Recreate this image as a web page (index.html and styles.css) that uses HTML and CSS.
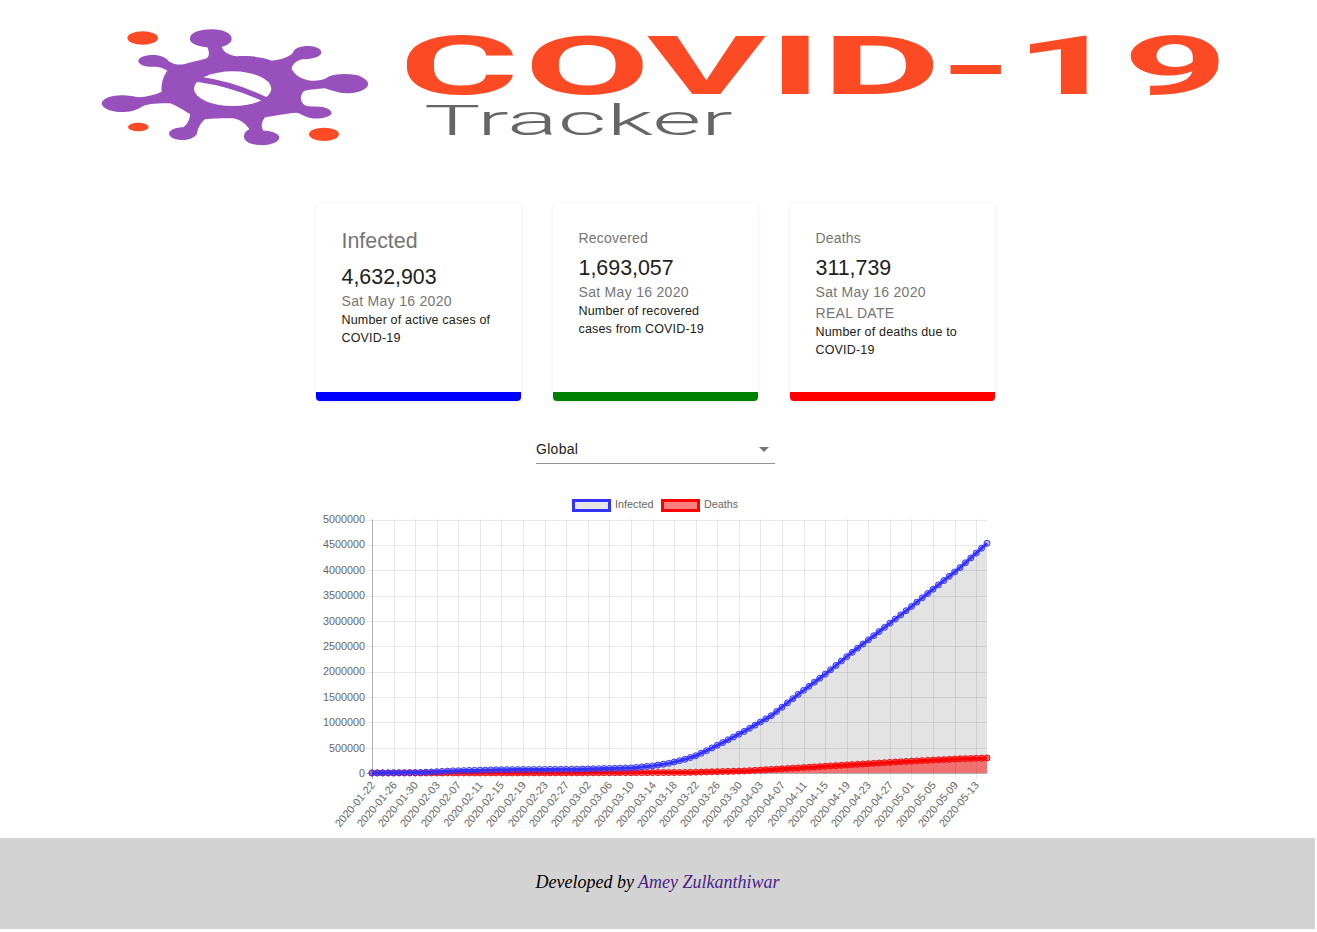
FILE: index.html
```html
<!DOCTYPE html>
<html lang="en">
<head>
    <meta charset="UTF-8">
    <meta name="viewport" content="width=device-width, initial-scale=1.0">
    <title>COVID-19 Tracker</title>
    <link rel="stylesheet" href="styles.css">
</head>
<body>
    <div class="app">
        <svg class="logo" viewBox="0 0 1315 170" role="img" aria-label="COVID-19 Tracker">
            <g transform="translate(90 10) scale(0.3333)">
                <path class="virus" fill-rule="evenodd" d="M352 112 C315 108 298 98 300 84 C302 66 335 58 365 58 C400 58 425 70 425 86 C425 100 405 108 395 110 C400 125 415 135 440 139 C480 136 520 142 545 152 C570 150 590 145 608 130 C612 115 630 108 655 108 C680 108 695 118 694 128 C692 142 660 148 635 148 C620 152 605 165 605 178 C615 195 635 210 665 212 C690 212 705 208 715 200 C735 190 770 190 800 195 C825 203 835 215 835 222 C833 240 800 250 770 250 C745 250 720 240 705 235 C680 238 650 238 640 245 C630 258 630 270 640 282 C650 292 665 288 690 290 C710 292 725 300 725 310 C722 322 690 328 665 325 C645 320 635 312 620 308 C590 310 550 318 525 322 C515 335 512 350 520 362 C545 362 568 370 568 383 C566 398 540 405 515 405 C485 405 462 395 462 380 C462 368 470 362 478 358 C470 345 455 330 430 325 C400 325 365 325 345 328 C330 340 325 355 322 365 C322 380 300 390 275 390 C250 390 237 380 237 370 C240 358 262 352 280 352 C295 340 300 325 300 312 C280 300 255 285 240 280 C210 280 175 280 155 290 C140 302 110 308 85 306 C55 304 35 292 35 280 C37 265 65 256 95 256 C115 256 135 260 145 262 C170 260 195 255 215 245 C213 225 218 200 232 182 C215 170 200 170 185 170 C160 170 145 162 145 152 C148 140 170 135 190 135 C210 135 228 142 238 155 C255 165 270 165 285 162 C310 155 335 150 350 145 C362 135 355 120 352 112 Z"/>
                <ellipse class="hole" cx="428" cy="236" rx="116" ry="52"/>
                <path class="slash" d="M320 207 Q430 222 525 268"/>
                <ellipse class="dot" cx="158" cy="84" rx="46" ry="20"/>
                <ellipse class="dot" cx="145" cy="351" rx="31" ry="13"/>
                <ellipse class="dot" cx="702" cy="373" rx="45" ry="20"/>
            </g>
            <text class="logo-title" transform="translate(405 94) scale(2.23 1)" x="-2.6 53.5 108.4 163 187 240 273.5 322">COVID-19</text>
            <text class="logo-sub" x="424" y="135" textLength="309" lengthAdjust="spacingAndGlyphs">Tracker</text>
        </svg>

        <div class="cards">
            <div class="card card-blue">
                <h5 class="card-title">Infected</h5>
                <div class="card-count">4,632,903</div>
                <div class="card-date">Sat May 16 2020</div>
                <p class="card-text">Number of active cases of COVID-19</p>
            </div>
            <div class="card card-green">
                <div class="card-label">Recovered</div>
                <div class="card-count">1,693,057</div>
                <div class="card-date">Sat May 16 2020</div>
                <p class="card-text">Number of recovered cases from COVID-19</p>
            </div>
            <div class="card card-red">
                <div class="card-label">Deaths</div>
                <div class="card-count">311,739</div>
                <div class="card-date">Sat May 16 2020</div>
                <div class="card-date">REAL DATE</div>
                <p class="card-text">Number of deaths due to COVID-19</p>
            </div>
        </div>

        <div class="picker">
            <span>Global</span>
            <svg class="picker-arrow" viewBox="0 0 24 24"><path d="M7 10l5 5 5-5z"/></svg>
        </div>

        <svg id="chart" class="chart" viewBox="316 490 679 348"></svg>
    </div>

    <footer class="footer">
        <span>Developed by <a href="#">Amey Zulkanthiwar</a></span>
    </footer>

    <script src="chart.js"></script>
</body>
</html>
```
FILE: styles.css
```css
html {
    font-size: 14px;
}
body {
    font-family: 'Liberation Sans', Arial, sans-serif;
    margin: 0;
    background-color: #fff;
}
.app {
    width: 1311px;
    display: flex;
    flex-direction: column;
    align-items: center;
}
.logo {
    display: block;
    width: 1315px;
    height: 170px;
    margin-right: -4px;
    filter: blur(0.5px);
}
.virus {
    fill: #9850bd;
}
.hole {
    fill: #fff;
}
.slash {
    fill: none;
    stroke: #9850bd;
    stroke-width: 16;
}
.dot {
    fill: #fc4a24;
}
.logo-title {
    font-family: Roboto, sans-serif;
    font-size: 82px;
    font-weight: 700;
    fill: #fc4a24;
}
.logo-sub {
    font-family: Roboto, sans-serif;
    font-size: 42px;
    font-weight: 300;
    fill: #666;
}
.cards {
    display: flex;
    gap: 32px;
    margin-top: 33px;
}
.card {
    width: 205px;
    height: 198px;
    box-sizing: border-box;
    padding: 25px 25.5px 0;
    background: #fff;
    border-radius: 4px;
    box-shadow: 0 1px 3px rgba(0,0,0,0.1);
}
.card-blue {
    border-bottom: 9px solid #0000ff;
}
.card-green {
    border-bottom: 9px solid #008000;
}
.card-red {
    border-bottom: 9px solid #ff0000;
}
.card-title {
    margin: -1px 0 8px;
    font-size: 21.4px;
    line-height: 28px;
    font-weight: 400;
    color: #757575;
}
.card-label {
    margin-bottom: 5px;
    font-size: 14px;
    line-height: 21px;
    letter-spacing: 0.2px;
    color: #757575;
}
.card-count {
    font-size: 21.4px;
    line-height: 28px;
    color: #212121;
}
.card-date {
    font-size: 14px;
    line-height: 21px;
    letter-spacing: 0.3px;
    color: #757575;
}
.card-text {
    margin: -1px 0 0;
    font-size: 12.5px;
    line-height: 18px;
    letter-spacing: 0.17px;
    color: #212121;
}
.picker {
    width: 239px;
    height: 24px;
    box-sizing: border-box;
    margin-top: 39px;
    margin-bottom: 26px;
    display: flex;
    justify-content: space-between;
    align-items: flex-start;
    border-bottom: 1px solid #949494;
    font-size: 14px;
    line-height: 18px;
    letter-spacing: 0.3px;
    color: #212121;
}
.picker-arrow {
    width: 24px;
    height: 24px;
    margin-top: -3px;
    margin-right: -1px;
    fill: #757575;
}
.chart {
    display: block;
    width: 679px;
    height: 348px;
}
.chart text {
    font-size: 10.8px;
    fill: #666;
}
.grid {
    stroke: rgba(0,0,0,0.09);
    stroke-width: 1;
}
.axis {
    stroke: rgba(0,0,0,0.3);
    stroke-width: 1;
}
.footer {
    width: 1315px;
    height: 91px;
    box-sizing: border-box;
    padding-bottom: 2px;
    display: flex;
    align-items: center;
    justify-content: center;
    background-color: #d3d3d3;
    font-family: 'Liberation Serif', cursive;
    font-style: italic;
    font-size: 18px;
    color: #000;
}
.footer a {
    color: #4b1f8a;
    text-decoration: none;
}
```
FILE: chart.js
```js
const NS = 'http://www.w3.org/2000/svg';
const svg = document.getElementById('chart');

const left = 372, right = 987, top0 = 519.5, bottom = 773;
const days = 115;
const maxVal = 5000000;

// rough daily totals, [day index, value], filled in between
const infected = [[0,555],[9,9900],[15,42000],[24,65000],[38,75000],[48,100000],[52,140000],[55,190000],[58,270000],[60,340000],[62,440000],[65,600000],[69,820000],[74,1130000],[79,1550000],[84,1950000],[89,2380000],[99,3200000],[109,4050000],[114,4530000]];
const deaths = [[0,17],[38,2500],[58,10000],[69,40000],[79,100000],[89,165000],[99,228000],[109,280000],[114,296000]];

function valueAt(table, day) {
    for (let i = 1; i < table.length; i++) {
        if (day <= table[i][0]) {
            const a = table[i - 1], b = table[i];
            return a[1] + (b[1] - a[1]) * (day - a[0]) / (b[0] - a[0]);
        }
    }
    return table[table.length - 1][1];
}

const xAt = d => left + (right - left) * d / (days - 1);
const yAt = v => bottom - (bottom - top0) * v / maxVal;

function add(tag, attrs, text) {
    const el = document.createElementNS(NS, tag);
    for (const k in attrs) el.setAttribute(k, attrs[k]);
    if (text) el.textContent = text;
    svg.appendChild(el);
    return el;
}

// grid
for (let i = 0; i <= 10; i++) {
    const y = Math.round(top0 + (bottom - top0) * i / 10) + 0.5;
    add('line', { x1: left - 6, x2: right, y1: y, y2: y, class: i === 10 ? 'axis' : 'grid' });
    add('text', { x: 365, y: 523 + i * 25.4, 'text-anchor': 'end' }, String(maxVal - i * 500000));
}
const start = Date.UTC(2020, 0, 22);
for (let d = 0; d < days; d += 4) {
    const x = Math.round(xAt(d)) + 0.5;
    add('line', { x1: x, x2: x, y1: top0, y2: bottom + 6, class: d === 0 ? 'axis' : 'grid' });
    const label = new Date(start + d * 86400000).toISOString().slice(0, 10);
    add('text', { 'text-anchor': 'end', transform: `translate(${x + 3} 785.5) rotate(-50)` }, label);
}

// datasets: both fills first so the lines stay clean on top
function points(table) {
    const pts = [];
    for (let d = 0; d < days; d++) pts.push([xAt(d), yAt(valueAt(table, d))]);
    return pts;
}
function pathOf(pts) {
    return pts.map(p => p[0].toFixed(1) + ' ' + p[1].toFixed(1)).join(' L');
}
function area(table, fill) {
    add('path', { d: `M${left} ${bottom} L${pathOf(points(table))} L${right} ${bottom} Z`, fill: fill });
}
function line(table, color, dot) {
    const pts = points(table);
    add('path', { d: 'M' + pathOf(pts), fill: 'none', stroke: color, 'stroke-width': 3 });
    pts.forEach(p => add('circle', { cx: p[0], cy: p[1], r: 3, fill: dot, stroke: color, 'stroke-width': 1 }));
}
area(infected, 'rgba(0,0,0,0.11)');
area(deaths, 'rgba(255,0,0,0.5)');
line(deaths, '#ff0000', 'rgba(255,0,0,0.5)');
line(infected, '#3333ff', 'rgba(51,51,255,0.3)');

// legend
add('rect', { x: 573.5, y: 500.5, width: 36, height: 10, fill: 'rgba(0,0,0,0.1)', stroke: '#3333ff', 'stroke-width': 3 });
add('text', { x: 615, y: 508 }, 'Infected');
add('rect', { x: 662.5, y: 500.5, width: 36, height: 10, fill: 'rgba(255,0,0,0.5)', stroke: '#ff0000', 'stroke-width': 3 });
add('text', { x: 704, y: 508 }, 'Deaths');
```
